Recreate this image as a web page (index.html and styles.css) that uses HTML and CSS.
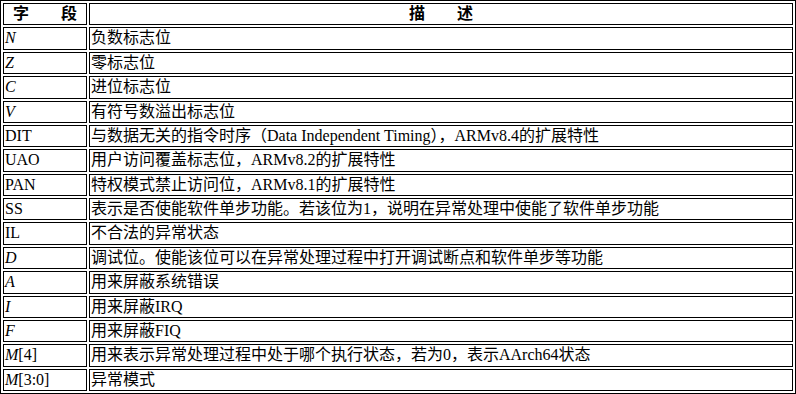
FILE: index.html
```html
<!DOCTYPE html>
<html lang="zh">
<head>
<meta charset="utf-8">
<link rel="stylesheet" href="styles.css">
</head>
<body>
<table class="fields">
<tr class="head"><th class="c1">字　　段</th><th class="c2">描　　述</th></tr>
<tr><td><i>N</i></td><td>负数标志位</td></tr>
<tr><td><i>Z</i></td><td>零标志位</td></tr>
<tr><td><i>C</i></td><td>进位标志位</td></tr>
<tr><td><i>V</i></td><td>有符号数溢出标志位</td></tr>
<tr><td>DIT</td><td>与数据无关的指令时序（Data Independent Timing），ARMv8.4的扩展特性</td></tr>
<tr><td>UAO</td><td>用户访问覆盖标志位，ARMv8.2的扩展特性</td></tr>
<tr><td>PAN</td><td>特权模式禁止访问位，ARMv8.1的扩展特性</td></tr>
<tr><td>SS</td><td>表示是否使能软件单步功能。若该位为1，说明在异常处理中使能了软件单步功能</td></tr>
<tr><td>IL</td><td>不合法的异常状态</td></tr>
<tr><td><i>D</i></td><td>调试位。使能该位可以在异常处理过程中打开调试断点和软件单步等功能</td></tr>
<tr><td><i>A</i></td><td>用来屏蔽系统错误</td></tr>
<tr><td><i>I</i></td><td>用来屏蔽IRQ</td></tr>
<tr><td><i>F</i></td><td>用来屏蔽FIQ</td></tr>
<tr><td><i>M</i>[4]</td><td>用来表示异常处理过程中处于哪个执行状态，若为0，表示AArch64状态</td></tr>
<tr><td><i>M</i>[3:0]</td><td>异常模式</td></tr>
</table>
</body>
</html>
```
FILE: styles.css
```css
html, body {
  margin: 0;
  padding: 0;
  background: #fff;
}
.fields {
  width: 796px;
  border: 1px solid #000;
  border-collapse: separate;
  border-spacing: 2px;
  font-family: "Liberation Serif", "Noto Sans CJK SC", serif;
  font-size: 16px;
  color: #000;
}
.fields th,
.fields td {
  border: 1px solid #000;
  padding: 1px;
  height: 18.375px;
  line-height: 18.375px;
  text-align: left;
  vertical-align: middle;
  white-space: nowrap;
}
.fields th {
  text-align: center;
  font-weight: bold;
}
.fields .c1 {
  width: 80px;
}
.fields td:first-child {
  width: 80px;
}
.fields i {
  font-style: italic;
}
```
